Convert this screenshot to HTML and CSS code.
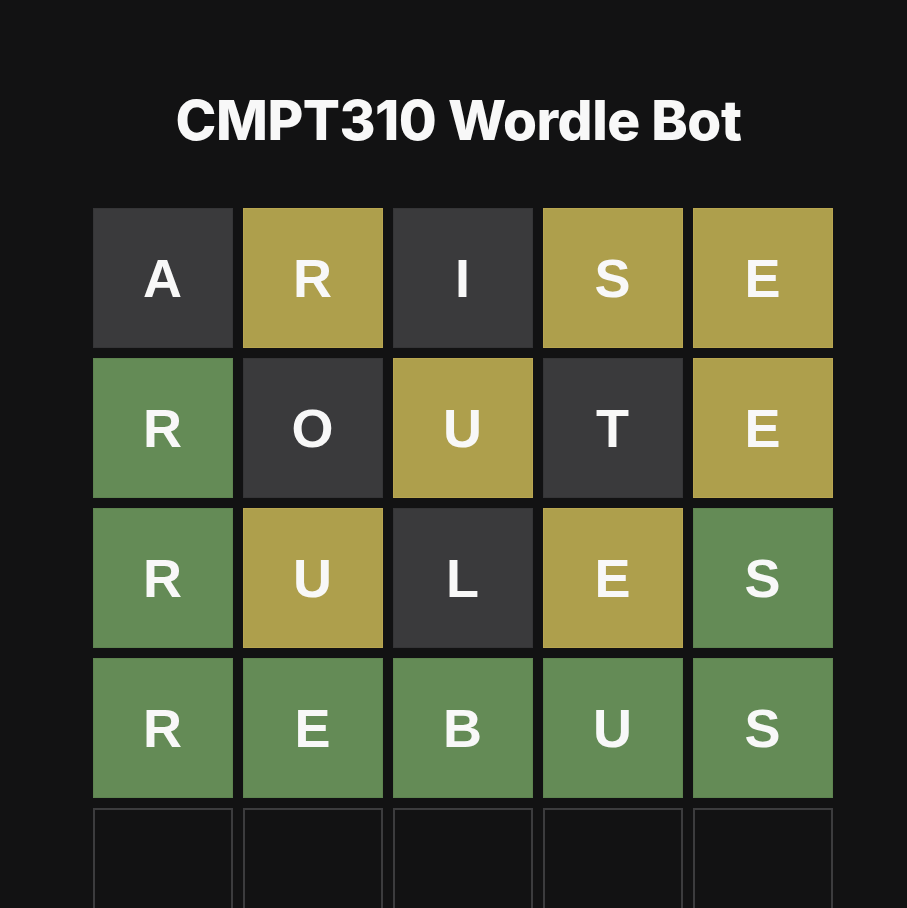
FILE: index.html
```html
<!DOCTYPE html>
<html lang="en">
<head>
<meta charset="utf-8">
<title>CMPT310 Wordle Bot</title>
<link rel="stylesheet" href="styles.css">
</head>
<body>
<main class="page">
  <h1 class="title">CMPT310 Wordle Bot</h1>
  <div class="board">
    <div class="row">
      <div class="tile absent">A</div>
      <div class="tile present">R</div>
      <div class="tile absent">I</div>
      <div class="tile present">S</div>
      <div class="tile present">E</div>
    </div>
    <div class="row">
      <div class="tile correct">R</div>
      <div class="tile absent">O</div>
      <div class="tile present">U</div>
      <div class="tile absent">T</div>
      <div class="tile present">E</div>
    </div>
    <div class="row">
      <div class="tile correct">R</div>
      <div class="tile present">U</div>
      <div class="tile absent">L</div>
      <div class="tile present">E</div>
      <div class="tile correct">S</div>
    </div>
    <div class="row">
      <div class="tile correct">R</div>
      <div class="tile correct">E</div>
      <div class="tile correct">B</div>
      <div class="tile correct">U</div>
      <div class="tile correct">S</div>
    </div>
    <div class="row">
      <div class="tile empty"></div>
      <div class="tile empty"></div>
      <div class="tile empty"></div>
      <div class="tile empty"></div>
      <div class="tile empty"></div>
    </div>
  </div>
</main>
</body>
</html>
```
FILE: styles.css
```css
html, body {
  margin: 0;
  padding: 0;
  background: #121213;
  height: 100%;
  overflow: hidden;
}

.page {
  display: flex;
  flex-direction: column;
  align-items: center;
  padding-left: 18px;
  padding-top: 93px;
}

.title {
  margin: 0 8px 0 0;
  font-family: "Inter", "Liberation Sans", sans-serif;
  font-weight: 800;
  font-size: 55px;
  line-height: 1;
  letter-spacing: -0.5px;
  color: #f8f8f8;
}

.board {
  margin-top: 60px;
  display: flex;
  flex-direction: column;
  gap: 10px;
}

.row {
  display: flex;
  gap: 10px;
}

.tile {
  box-sizing: border-box;
  width: 140px;
  height: 140px;
  display: flex;
  align-items: center;
  justify-content: center;
  font-family: "Liberation Sans", Arial, sans-serif;
  font-weight: 700;
  font-size: 54px;
  color: #f8f8f8;
  border: 1px solid transparent;
}

.absent {
  background: #3a3a3c;
  border-color: #353537;
}

.present {
  background: #ae9f4c;
  border-color: #b8a550;
}

.correct {
  background: #648b56;
  border-color: #5e8450;
}

.empty {
  background: #121213;
  border: 2px solid #3c3c3e;
}
```
